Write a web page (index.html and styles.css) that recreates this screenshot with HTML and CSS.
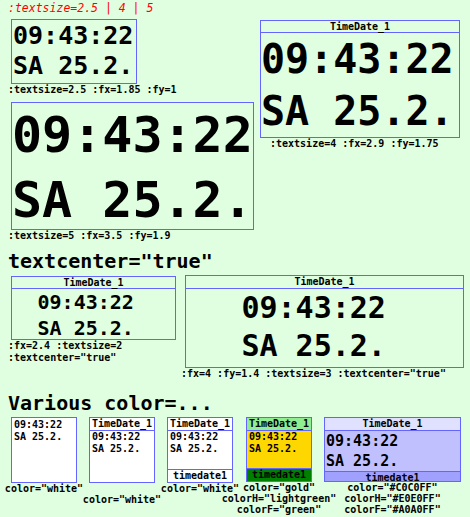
FILE: index.html
```html
<!DOCTYPE html>
<html>
<head>
<meta charset="utf-8">
<link rel="stylesheet" href="styles.css">
</head>
<body>
<div class="page">
  <div class="top">
    <div class="col-left">
      <div class="note">:textsize=2.5 | 4 | 5</div>
      <div class="td td1">
        <div class="tbody b1"><div>09:43:22</div><div>SA 25.2.</div></div>
      </div>
      <div class="cap">:textsize=2.5 :fx=1.85 :fy=1</div>
      <div class="td td2">
        <div class="tbody b2"><div>09:43:22</div><div>SA 25.2.</div></div>
      </div>
      <div class="cap">:textsize=5 :fx=3.5 :fy=1.9</div>
    </div>
    <div class="col-right">
      <div class="td td3">
        <div class="ttitle">TimeDate_1</div>
        <div class="tbody b3"><div>09:43:22</div><div>SA 25.2.</div></div>
      </div>
      <div class="cap cap3">:textsize=4 :fx=2.9 :fy=1.75</div>
    </div>
  </div>

  <div class="heading h1">textcenter="true"</div>
  <div class="row2">
    <div class="item4">
      <div class="td td4">
        <div class="ttitle t4">TimeDate_1</div>
        <div class="tbody b4"><div>09:43:22</div><div>SA 25.2.</div></div>
      </div>
      <div class="cap">:fx=2.4 :textsize=2</div>
      <div class="cap">:textcenter="true"</div>
    </div>
    <div class="item5">
      <div class="td td5">
        <div class="ttitle t5">TimeDate_1</div>
        <div class="tbody b5"><div>09:43:22</div><div>SA 25.2.</div></div>
      </div>
      <div class="cap">:fx=4 :fy=1.4 :textsize=3 :textcenter="true"</div>
    </div>
  </div>

  <div class="heading h2">Various color=...</div>
  <div class="row3">
    <div class="citem ca">
      <div class="td small white">
        <div class="tbody bs bsa"><div>09:43:22</div><div>SA 25.2.</div></div>
      </div>
      <div class="cap ccap">color="white"</div>
    </div>
    <div class="citem cb">
      <div class="td small white">
        <div class="ttitle ts tw">TimeDate_1</div>
        <div class="tbody bs"><div>09:43:22</div><div>SA 25.2.</div></div>
      </div>
      <div class="cap ccap low">color="white"</div>
    </div>
    <div class="citem cc">
      <div class="td small white">
        <div class="ttitle ts tw">TimeDate_1</div>
        <div class="tbody bs"><div>09:43:22</div><div>SA 25.2.</div></div>
        <div class="tfoot fw">timedate1</div>
      </div>
      <div class="cap ccap">color="white"</div>
    </div>
    <div class="citem cd">
      <div class="td small gold short">
        <div class="ttitle ts tg">TimeDate_1</div>
        <div class="tbody bs"><div>09:43:22</div><div>SA 25.2.</div></div>
        <div class="tfoot fg">timedate1</div>
      </div>
      <div class="cap ccap">color="gold"<br>colorH="lightgreen"<br>colorF="green"</div>
    </div>
    <div class="citem ce">
      <div class="td small blue short">
        <div class="ttitle ts tb">TimeDate_1</div>
        <div class="tbody be"><div>09:43:22</div><div>SA 25.2.</div></div>
        <div class="tfoot fb">timedate1</div>
      </div>
      <div class="cap ccap">color="#C0C0FF"<br>colorH="#E0E0FF"<br>colorF="#A0A0FF"</div>
    </div>
  </div>
</div>
</body>
</html>
```

FILE: styles.css
```css
html, body {
  margin: 0;
  padding: 0;
  background: #e0ffe0;
}
body {
  font-family: "DejaVu Sans Mono", monospace;
  font-weight: bold;
  color: #000;
  width: 470px;
  height: 517px;
  overflow: hidden;
}
.page {
  padding-left: 8px;
}
.top {
  display: flex;
  align-items: flex-start;
}
.col-left {
  width: 252px;
  flex: none;
  display: flex;
  flex-direction: column;
  align-items: flex-start;
}
.col-right {
  display: flex;
  flex-direction: column;
  align-items: flex-start;
  padding-top: 20px;
}
.note {
  color: #ff0000;
  font-style: italic;
  font-weight: normal;
  font-size: 11.5px;
  line-height: 16px;
  height: 16px;
  white-space: nowrap;
}
.td {
  box-sizing: border-box;
  border: 1px solid #6464ff;
  display: flex;
  flex-direction: column;
  margin-left: 3px;
  overflow: hidden;
}
.ttitle {
  font-size: 10px;
  line-height: 11px;
  text-align: center;
  border-bottom: 1px solid #6464ff;
  white-space: nowrap;
}
.tbody {
  flex: 1;
  white-space: nowrap;
}
.tfoot {
  font-size: 10px;
  line-height: 12px;
  text-align: center;
  border-top: 1px solid #6464ff;
  white-space: nowrap;
}
.cap {
  font-size: 10px;
  line-height: 12px;
  white-space: nowrap;
}

.td1 {
  width: 126px;
  height: 65px;
  margin-top: 3px;
}
.b1 {
  font-size: 25px;
  line-height: 30px;
  padding: 1px 0 0 1px;
}
.td2 {
  width: 243px;
  height: 128px;
  margin-top: 6px;
}
.b2 {
  font-size: 50px;
  line-height: 65px;
}
.td3 {
  width: 200px;
  height: 118px;
  margin-left: 0;
}
.b3 {
  font-size: 40px;
  line-height: 52px;
}
.cap3 {
  padding-left: 10px;
}

.heading {
  font-size: 20px;
  line-height: 24px;
  white-space: nowrap;
}
.h1 {
  margin-top: 7px;
}
.h2 {
  margin-top: 11px;
}

.row2 {
  display: flex;
  align-items: flex-start;
}
.item4 {
  width: 168px;
  flex: none;
}
.td4 {
  width: 165px;
  height: 64px;
  margin-top: 3px;
}
.b4 {
  font-size: 20px;
  line-height: 26px;
  text-align: center;
  padding-right: 1.3ch;
}
.item5 {
  margin-left: 5px;
  flex: none;
}
.td5 {
  width: 279px;
  height: 93px;
  margin-top: 2px;
  margin-left: 4px;
}
.t5 {
  line-height: 12px;
}
.b5 {
  font-size: 30px;
  line-height: 38px;
  text-align: center;
  padding-right: 1.2ch;
}

.row3 {
  display: flex;
  align-items: flex-start;
  margin-top: 2px;
  padding-left: 3px;
  gap: 12px;
}
.citem {
  flex: none;
  width: 66px;
  display: flex;
  flex-direction: column;
  align-items: center;
}
.cd {
  margin-left: 1px;
}
.ce {
  width: 137px;
}
.small {
  margin-left: 0;
  width: 100%;
  height: 66px;
}
.small.short {
  height: 65px;
}
.white {
  background: #ffffff;
}
.gold {
  background: #ffd700;
}
.blue {
  background: #c0c0ff;
}
.ts {
  line-height: 12px;
}
.tw {
  background: #ffffff;
}
.tg {
  background: #90ee90;
}
.tb {
  background: #e0e0ff;
}
.fw {
  background: #ffffff;
}
.fg {
  background: #008000;
}
.fb {
  background: #a0a0ff;
}
.bs {
  font-size: 10px;
  line-height: 12px;
  padding-left: 2px;
}
.bsa {
  padding-top: 1px;
}
.be {
  font-size: 15px;
  line-height: 20px;
  padding-left: 1px;
}
.ccap {
  line-height: 11px;
  text-align: center;
}
.low {
  padding-top: 11px;
}
```
